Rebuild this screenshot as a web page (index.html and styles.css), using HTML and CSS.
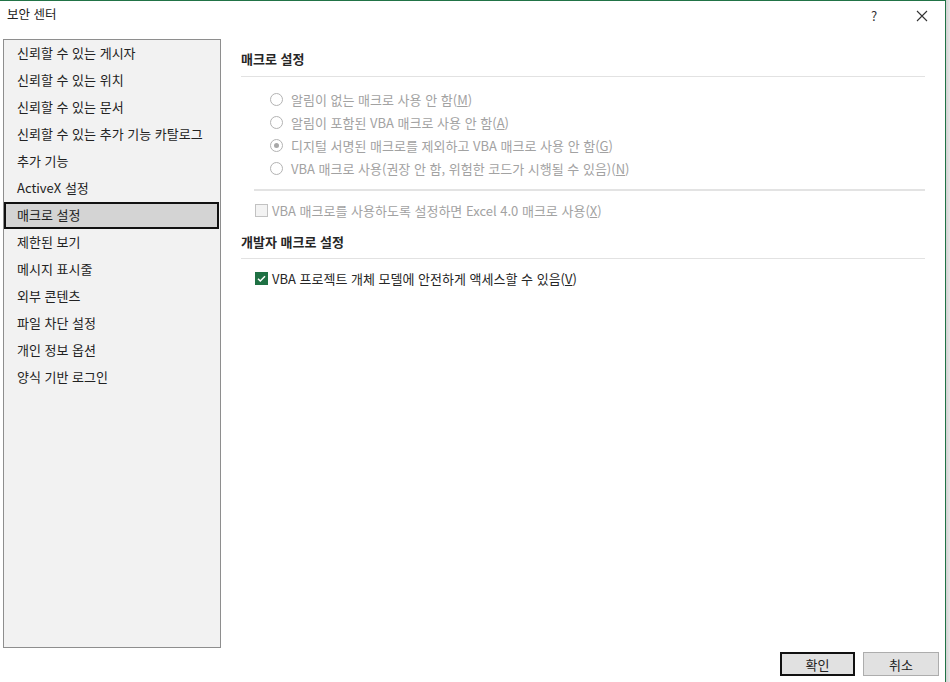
FILE: index.html
```html
<!DOCTYPE html>
<html lang="ko">
<head>
<meta charset="utf-8">
<title>보안 센터</title>
<link rel="stylesheet" href="styles.css">
</head>
<body>
<div class="window">
  <div class="titlebar">
    <span class="title">보안 센터</span>
    <span class="help">?</span>
    <span class="close"><svg width="12" height="12" viewBox="0 0 12 12"><path d="M1 1L11 11M11 1L1 11" stroke="#333" stroke-width="1.1" fill="none"/></svg></span>
  </div>
  <div class="main">
    <ul class="sidebar">
      <li class="nav-item">신뢰할 수 있는 게시자</li>
      <li class="nav-item">신뢰할 수 있는 위치</li>
      <li class="nav-item">신뢰할 수 있는 문서</li>
      <li class="nav-item">신뢰할 수 있는 추가 기능 카탈로그</li>
      <li class="nav-item">추가 기능</li>
      <li class="nav-item">ActiveX 설정</li>
      <li class="nav-item selected">매크로 설정</li>
      <li class="nav-item">제한된 보기</li>
      <li class="nav-item">메시지 표시줄</li>
      <li class="nav-item">외부 콘텐츠</li>
      <li class="nav-item">파일 차단 설정</li>
      <li class="nav-item">개인 정보 옵션</li>
      <li class="nav-item">양식 기반 로그인</li>
    </ul>
    <div class="content">
      <div class="section-title">매크로 설정</div>
      <div class="radios">
        <div class="row disabled"><span class="radio"></span><span>알림이 없는 매크로 사용 안 함(<u>M</u>)</span></div>
        <div class="row disabled"><span class="radio"></span><span>알림이 포함된 VBA 매크로 사용 안 함(<u>A</u>)</span></div>
        <div class="row disabled"><span class="radio on"></span><span>디지털 서명된 매크로를 제외하고 VBA 매크로 사용 안 함(<u>G</u>)</span></div>
        <div class="row disabled"><span class="radio"></span><span>VBA 매크로 사용(권장 안 함, 위험한 코드가 시행될 수 있음)(<u>N</u>)</span></div>
      </div>
      <div class="separator"></div>
      <div class="row check-row disabled"><span class="checkbox"></span><span>VBA 매크로를 사용하도록 설정하면 Excel 4.0 매크로 사용(<u>X</u>)</span></div>
      <div class="section-title second">개발자 매크로 설정</div>
      <div class="row check-row checked-row"><span class="checkbox checked"><svg width="13" height="13" viewBox="0 0 13 13"><path d="M3 6.8L5.3 9L10 4.2" stroke="#fff" stroke-width="1.5" fill="none"/></svg></span><span>VBA 프로젝트 개체 모델에 안전하게 액세스할 수 있음(<u>V</u>)</span></div>
    </div>
  </div>
  <div class="footer">
    <button class="btn primary">확인</button>
    <button class="btn">취소</button>
  </div>
</div>
</body>
</html>
```
FILE: styles.css
```css
html, body {
  margin: 0;
  padding: 0;
}
body {
  width: 950px;
  height: 682px;
  overflow: hidden;
  background: linear-gradient(to right, #d2d2d2 0, #d2d2d2 946px, #dcdcdc 948px, #e8e8e8 950px);
  font-family: "Noto Sans CJK KR", "Noto Sans", sans-serif;
  font-size: 13px;
  color: #262626;
}
.window {
  width: 945px;
  height: 681px;
  background: #fff;
  border-top: 1px solid #217346;
  border-right: 1px solid #217346;
  display: flex;
  flex-direction: column;
}
.titlebar {
  height: 38px;
  display: flex;
  align-items: flex-start;
  position: relative;
}
.title {
  margin-left: 7px;
  margin-top: 4px;
  line-height: 18px;
  font-size: 12.5px;
  color: #222;
}
.help {
  position: absolute;
  left: 871px;
  top: 6px;
  font-size: 13px;
  line-height: 18px;
  color: #333;
}
.close {
  position: absolute;
  left: 916px;
  top: 9px;
  width: 12px;
  height: 12px;
  display: block;
}
.close svg { display: block; }
.main {
  display: flex;
  height: 609px;
}
.sidebar {
  list-style: none;
  margin: 0 0 0 3px;
  padding: 0;
  width: 216px;
  height: 607px;
  border: 1px solid #8e8e8e;
  background: #f2f2f2;
}
.nav-item {
  height: 27px;
  line-height: 25px;
  padding-bottom: 2px;
  padding-left: 13px;
  color: #222;
  box-sizing: border-box;
  white-space: nowrap;
}
.nav-item.selected {
  background: #d4d4d4;
  border: 2px solid #111;
  line-height: 21px;
  padding-left: 11px;
  margin-right: 1px;
}
.content {
  flex: 1;
  padding: 0 20px 0 20px;
  display: flex;
  flex-direction: column;
}
.section-title {
  font-weight: bold;
  line-height: 18px;
  padding-top: 11px;
  padding-bottom: 8px;
  border-bottom: 1px solid #e2e2e2;
  color: #262626;
}
.section-title.second {
  padding-top: 11px;
  padding-bottom: 7px;
}
.radios {
  margin-top: 11px;
  margin-left: 29px;
}
.row {
  height: 23px;
  display: flex;
  align-items: center;
  white-space: nowrap;
}
.row u { text-decoration: underline; }
.disabled { color: #a2a2a2; }
.radio {
  width: 11px;
  height: 11px;
  border: 1px solid #b3b3b3;
  border-radius: 50%;
  background: #fff;
  margin-right: 8px;
  position: relative;
  flex: none;
}
.radio.on::after {
  content: "";
  position: absolute;
  left: 3px;
  top: 3px;
  width: 5px;
  height: 5px;
  border-radius: 50%;
  background: #a8a8a8;
}
.separator {
  height: 2px;
  background: #e3e3e3;
  margin-top: 9px;
  margin-left: 13px;
}
.check-row {
  margin-left: 14px;
  margin-top: 8px;
}
.checked-row {
  margin-top: 8px;
  color: #262626;
}
.checkbox {
  width: 11px;
  height: 11px;
  border: 1px solid #c2c2c2;
  background: #f3f3f3;
  margin-right: 4px;
  flex: none;
  display: block;
}
.checkbox.checked {
  width: 13px;
  height: 13px;
  border: none;
  background: #1f7144;
}
.checkbox svg { display: block; }
.footer {
  display: flex;
  justify-content: flex-end;
  gap: 8px;
  padding-top: 4px;
  padding-right: 6px;
}
.btn {
  width: 76px;
  height: 24px;
  margin: 0;
  padding: 0;
  font-family: inherit;
  font-size: 13px;
  color: #222;
  background: #e1e1e1;
  border: 1px solid #adadad;
  box-sizing: border-box;
}
.btn.primary {
  width: 75px;
  border: 2px solid #111;
}
```
